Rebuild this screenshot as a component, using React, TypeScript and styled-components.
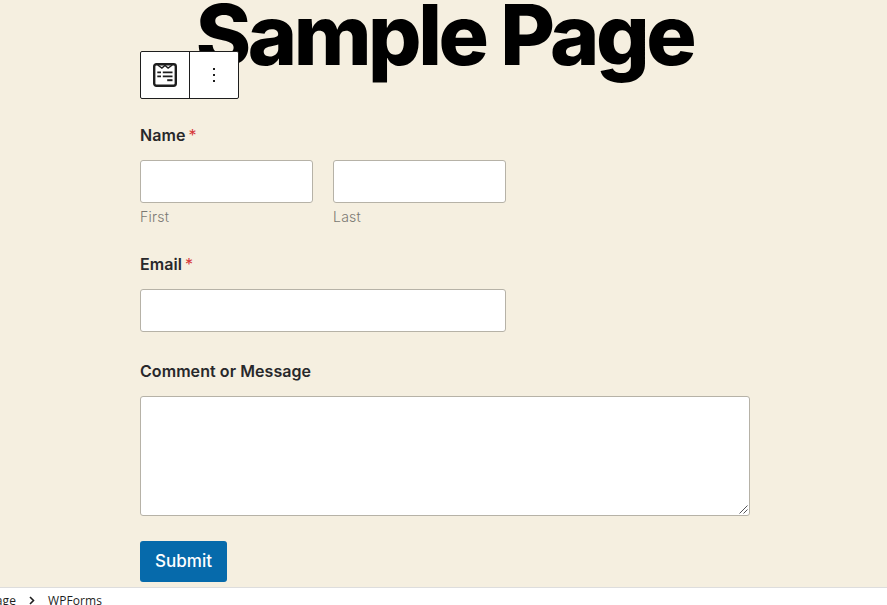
import React from "react";
import styled, { createGlobalStyle } from "styled-components";

const GlobalStyle = createGlobalStyle`
  *, *::before, *::after { box-sizing: border-box; }
  body { margin: 0; background: #f5efe0; overflow: hidden; }
`;

const Editor = styled.div`
  display: flex;
  flex-direction: column;
  width: 887px;
  height: 605px;
  overflow: hidden;
  background: #f5efe0;
  color: #28282b;
  font-family: Inter, "Liberation Sans", sans-serif;
`;

const Canvas = styled.main`
  position: relative;
  flex: 1;
  min-height: 0;
  padding: 0 137px 0 140px;
`;

const Title = styled.h1`
  height: 125px;
  margin: 0;
  padding-right: 1px;
  color: #000;
  font-size: 84px;
  font-weight: 800;
  letter-spacing: -0.0415625em;
  line-height: 70px;
  text-align: center;
  white-space: nowrap;
`;

const BlockToolbar = styled.div`
  position: absolute;
  top: 51px;
  left: 140px;
  display: flex;
  width: 99px;
  height: 48px;
  border: 1px solid #1e1e1e;
  border-radius: 2px;
  background: #fff;
`;

const ToolbarButton = styled.button<{ $divided?: boolean }>`
  display: flex;
  flex: ${(p) => (p.$divided ? "0 0 49px" : "1")};
  align-items: center;
  justify-content: center;
  padding: 0;
  border: 0;
  border-right: ${(p) => (p.$divided ? "1px solid #1e1e1e" : "0")};
  background: transparent;
  color: #1e1e1e;
`;

const Form = styled.form`
  width: 610px;
`;

const Field = styled.div<{ $height: number }>`
  width: ${(p) => (p.$height > 140 ? "610px" : "366px")};
  height: ${(p) => p.$height}px;
`;

const Label = styled.label`
  display: block;
  height: 35px;
  font-size: 16px;
  font-weight: 600;
  letter-spacing: 0.07px;
  line-height: 20px;
  white-space: nowrap;
`;

const Required = styled.span`
  margin-left: -1px;
  color: #d63638;
  font-weight: 400;
`;

const NameRow = styled.div`
  display: grid;
  grid-template-columns: 173px 173px;
  gap: 20px;
`;

const Input = styled.input`
  display: block;
  width: 100%;
  height: 43px;
  border: 1px solid #b6b2a7;
  border-radius: 3px;
  background: #fff;
  outline: none;
`;

const SubLabel = styled.span`
  display: block;
  margin-top: 4px;
  color: #7a7872;
  font-size: 14px;
  font-weight: 300;
  letter-spacing: 0.25px;
  line-height: 20px;
`;

const MessageBox = styled.div`
  display: flex;
  align-items: flex-end;
  justify-content: flex-end;
  width: 610px;
  height: 120px;
  padding: 1px;
  border: 1px solid #b6b2a7;
  border-radius: 3px;
  background: #fff;
`;

const Submit = styled.button`
  display: block;
  width: 87px;
  height: 41px;
  padding: 0;
  border: 0;
  border-radius: 3px;
  background: #066aab;
  color: #fff;
  font-family: inherit;
  font-size: 17px;
  font-weight: 500;
  letter-spacing: 0.06px;
  line-height: 41px;
`;

const Breadcrumb = styled.footer`
  display: flex;
  flex: 0 0 18px;
  align-items: flex-start;
  min-height: 0;
  border-top: 1px solid #dddddd;
  background: #fff;
  color: #1e1e1e;
  font-family: "Open Sans", sans-serif;
  font-size: 12px;
  letter-spacing: 0.1px;
  line-height: 26px;
  white-space: nowrap;
`;

const ParentCrumb = styled.span`
  display: flex;
  justify-content: flex-end;
  width: 16px;
`;

const CrumbArrow = styled.svg`
  flex: none;
  margin: 8px 13px 0 13px;
`;

const FormIcon = () => (
  <svg width="24" height="24" viewBox="0 0 24 24" fill="none" stroke="currentColor">
    <rect x="1.200" y="1.200" width="21.600" height="21.600" rx="2.200" strokeWidth="2.400" />
    <path d="M4.700 2l4.200 3.100 3.100-2.600 3.100 2.600L19.300 2" strokeWidth="1.400" />
    <path d="M4.300 9.400h3.700M9.800 9.400h9.700M4.300 13.400h3.700M9.800 13.400h9.700" strokeWidth="1.700" />
    <path d="M14.200 17.200h5.300" strokeWidth="2" />
  </svg>
);

const MoreIcon = () => (
  <svg width="24" height="24" viewBox="0 0 24 24" fill="currentColor">
    <path d="M11 5h2v2h-2zM11 11h2v2h-2zM11 17h2v2h-2z" />
  </svg>
);

export default function App() {
  return (
    <Editor>
      <GlobalStyle />
      <Canvas>
        <Title>Sample Page</Title>
        <BlockToolbar>
          <ToolbarButton $divided aria-label="WPForms">
            <FormIcon />
          </ToolbarButton>
          <ToolbarButton aria-label="Options">
            <MoreIcon />
          </ToolbarButton>
        </BlockToolbar>
        <Form onSubmit={(e) => e.preventDefault()}>
          <Field $height={129}>
            <Label>
              Name <Required>*</Required>
            </Label>
            <NameRow>
              <div>
                <Input aria-label="First" />
                <SubLabel>First</SubLabel>
              </div>
              <div>
                <Input aria-label="Last" />
                <SubLabel>Last</SubLabel>
              </div>
            </NameRow>
          </Field>
          <Field $height={107}>
            <Label>
              Email <Required>*</Required>
            </Label>
            <Input aria-label="Email" />
          </Field>
          <Field $height={180}>
            <Label>Comment or Message</Label>
            <MessageBox role="textbox">
              <svg width="9" height="9" viewBox="0 0 9 9" stroke="#55555a" strokeWidth="1">
                <path d="M0.500 8.500l8-8M4.500 8.500l4-4" />
              </svg>
            </MessageBox>
          </Field>
          <Submit>Submit</Submit>
        </Form>
      </Canvas>
      <Breadcrumb>
        <ParentCrumb>Sample Page</ParentCrumb>
        <CrumbArrow width="6" height="9" viewBox="0 0 6 9" fill="none" stroke="#1e1e1e" strokeWidth="1.600">
          <path d="M1 1l3.500 3.500L1 8" />
        </CrumbArrow>
        <span>WPForms</span>
      </Breadcrumb>
    </Editor>
  );
}
